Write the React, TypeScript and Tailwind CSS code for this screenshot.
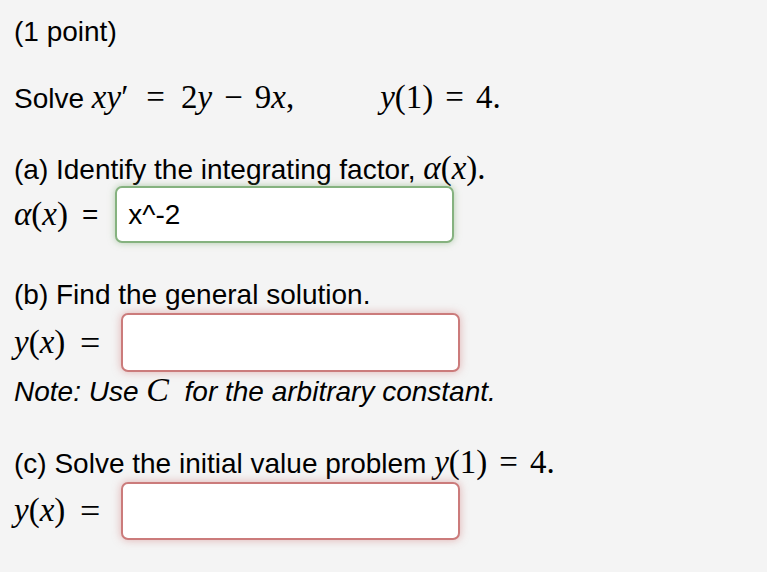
import React from 'react'

const sans = "font-['Liberation_Sans',Arial,sans-serif]"
const serif = "font-['Liberation_Serif','Times_New_Roman',serif]"

// math run: serif, upright by default, italic only for variables
function M({ children, className }: { children: React.ReactNode; className?: string }) {
  return <span className={`${serif} ${className ?? 'text-[33px]'}`}>{children}</span>
}

function I({ children }: { children: React.ReactNode }) {
  return <span className="italic">{children}</span>
}

function AnswerBox({ value, ok, className }: { value?: string; ok?: boolean; className?: string }) {
  return (
    <div
      className={`flex w-[339px] items-center rounded-[7px] border-2 bg-white px-[11px] ${
        ok
          ? 'border-[#85b27f] shadow-[0_0_7px_rgba(120,170,110,0.55)]'
          : 'border-[#cb7b7b] shadow-[0_0_8px_rgba(205,110,110,0.5)]'
      } ${className ?? ''}`}
    >
      <span className={`${sans} text-[28px] leading-none text-black`}>{value}</span>
    </div>
  )
}

export default function App() {
  return (
    <div className={`${sans} min-h-[572px] w-[767px] bg-[#f4f4f4] pl-[14px] pt-[16px] text-[28px] leading-[32px] text-black`}>
      {/* header */}
      <div className="h-[32px]">(1 point)</div>

      {/* problem */}
      <div className="mt-[33px] h-[32px] whitespace-nowrap">
        Solve{' '}
        <M>
          <I>x</I>
          <I>y</I>′<span className="ml-[18px] mr-[16px]">=</span>2<I>y</I>
          <span className="mx-[12px]">−</span>9<I>x</I>,
        </M>
        <M className="ml-[86px] text-[33px]">
          <I>y</I>(1)<span className="mx-[12px]">=</span>4.
        </M>
      </div>

      {/* (a) */}
      <div className="mt-[39px] h-[32px] whitespace-nowrap">
        (a) Identify the integrating factor,{' '}
        <M>
          <I>α</I>(<I>x</I>).
        </M>
      </div>
      <div className="mt-[2px] flex items-center">
        <span className="w-[68px] whitespace-nowrap">
          <M>
            <I>α</I>(<I>x</I>)
          </M>
        </span>
        <span>=</span>
        <AnswerBox value="x^-2" ok className="ml-[17px] h-[57px]" />
      </div>

      {/* (b) */}
      <div className="mt-[36px] h-[32px] whitespace-nowrap">(b) Find the general solution.</div>
      <div className="mt-[2px] flex items-center">
        <span className="w-[66px] whitespace-nowrap">
          <M>
            <I>y</I>(<I>x</I>)
          </M>
        </span>
        <M className="text-[36px]">=</M>
        <AnswerBox className="ml-[21px] h-[59px]" />
      </div>
      <div className="mt-[2px] h-[32px] whitespace-nowrap italic">
        Note: Use{' '}
        <M className="text-[34px]">
          <I>C</I>
        </M>
        &nbsp; for the arbitrary constant.
      </div>

      {/* (c) */}
      <div className="mt-[40px] h-[32px] whitespace-nowrap">
        (c) Solve the initial value problem{' '}
        <M>
          <I>y</I>(1)<span className="mx-[12px]">=</span>4.
        </M>
      </div>
      <div className="mt-[4px] flex items-center">
        <span className="w-[66px] whitespace-nowrap">
          <M>
            <I>y</I>(<I>x</I>)
          </M>
        </span>
        <M className="text-[36px]">=</M>
        <AnswerBox className="ml-[21px] h-[58px]" />
      </div>
    </div>
  )
}
